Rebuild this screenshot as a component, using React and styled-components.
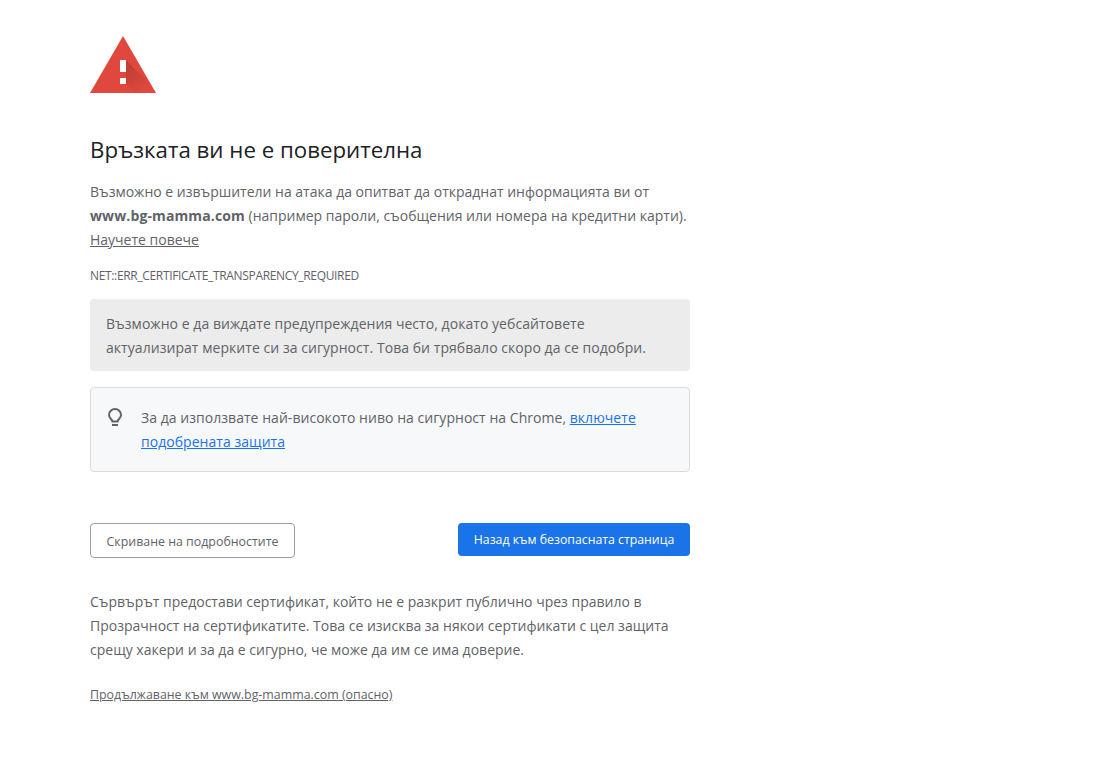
import React from 'react'
import styled, { createGlobalStyle } from 'styled-components'

const GlobalStyle = createGlobalStyle`
  html, body {
    margin: 0;
    padding: 0;
    background: #fff;
  }
  body {
    font-family: "Open Sans", "Noto Sans", "Liberation Sans", sans-serif;
    color: #5f6368;
  }
`

const Page = styled.div`
  width: 600px;
  height: 737px;
  padding: 36px 0 0 90px;
  box-sizing: content-box;
`

const WarningIcon = styled.svg`
  display: block;
  width: 66px;
  height: 57px;
`

const Heading = styled.h1`
  margin: 42px 0 0;
  font-size: 22.27px;
  font-weight: 400;
  line-height: 30px;
  color: #202124;
`

const Paragraph = styled.p`
  margin: ${p => p.$top || 0}px 0 0;
  font-size: 14px;
  line-height: 24px;
`

const Strong = styled.strong`
  font-weight: 700;
  letter-spacing: 0.12px;
`

const PlainLink = styled.a`
  color: #5f6368;
  text-decoration: underline;
`

const ErrorCode = styled.div`
  margin-top: 16px;
  font-size: 12px;
  line-height: 16px;
  letter-spacing: -0.34px;
`

const NoticeBox = styled.div`
  margin-top: 15px;
  padding: 13px 16px 11px;
  background: #ececec;
  border-radius: 4px;
  font-size: 14px;
  line-height: 24px;
  letter-spacing: 0.05px;
`

const TipBox = styled.div`
  display: flex;
  gap: 16px;
  margin-top: 16px;
  padding: 18px 16px 17px 16px;
  background: #f7f8fa;
  border: 1px solid #dadce0;
  border-radius: 4px;
  font-size: 14px;
  line-height: 24px;
  letter-spacing: 0.04px;
`

const BulbIcon = styled.svg`
  flex: none;
  width: 18px;
  height: 24px;
`

const BlueLink = styled.a`
  color: #1a73e8;
  text-decoration: underline;
`

const Buttons = styled.div`
  display: flex;
  justify-content: space-between;
  align-items: flex-start;
  margin-top: 51px;
`

const OutlineButton = styled.button`
  height: 35px;
  width: 205px;
  padding: 1px 0 0;
  background: #fff;
  border: 1px solid #9aa0a6;
  border-radius: 4px;
  color: #5f6368;
  font: 12.4px "Open Sans", "Noto Sans", sans-serif;
`

const PrimaryButton = styled.button`
  height: 33px;
  width: 232px;
  padding: 0;
  background: #1a73e8;
  border: 0;
  border-radius: 4px;
  color: #fff;
  font: 12.3px "Open Sans", "Noto Sans", sans-serif;
`

const Proceed = styled.a`
  display: block;
  margin-top: 25px;
  font-size: 12.4px;
  line-height: 16px;
  color: #5f6368;
  text-decoration: underline;
`

export default function App() {
  return (
    <>
      <GlobalStyle />
      <Page>
        <WarningIcon viewBox="0 0 66 57">
          <defs>
            <linearGradient id="warnShade" gradientUnits="userSpaceOnUse" x1="36" y1="34" x2="54" y2="54">
              <stop offset="0" stopColor="#000" stopOpacity="0.14" />
              <stop offset="1" stopColor="#000" stopOpacity="0" />
            </linearGradient>
          </defs>
          <path d="M33 0 L66 57 L0 57 Z" fill="#e0483d" />
          <path d="M36 24 L62 50 L66 57 L45 57 L36 48 Z" fill="url(#warnShade)" />
          <rect x="30" y="24" width="6" height="12" fill="#fff" />
          <rect x="30" y="42" width="6" height="6" fill="#fff" />
        </WarningIcon>
        <Heading>Връзката ви не е поверителна</Heading>
        <Paragraph $top={15}>
          Възможно е извършители на атака да опитват да откраднат информацията ви от{' '}
          <Strong>www.bg-mamma.com</Strong> (например пароли, съобщения или номера на кредитни карти).{' '}
          <PlainLink href="#">Научете повече</PlainLink>
        </Paragraph>
        <ErrorCode>NET::ERR_CERTIFICATE_TRANSPARENCY_REQUIRED</ErrorCode>
        <NoticeBox>
          Възможно е да виждате предупреждения често, докато уебсайтовете актуализират мерките си за сигурност. Това би трябвало скоро да се подобри.
        </NoticeBox>
        <TipBox>
          <BulbIcon viewBox="0 0 18 24" fill="none" stroke="#5f6368" strokeWidth="2">
            <path d="M5.5 15.5 C5.5 13.5 2 12.5 2 9 A6 6 0 0 1 14 9 C14 12.5 10.5 13.5 10.5 15.5 Z" />
            <path d="M5 19 H11" />
          </BulbIcon>
          <div>
            За да използвате най-високото ниво на сигурност на Chrome,{' '}
            <BlueLink href="#">включете подобрената защита</BlueLink>
          </div>
        </TipBox>
        <Buttons>
          <OutlineButton>Скриване на подробностите</OutlineButton>
          <PrimaryButton>Назад към безопасната страница</PrimaryButton>
        </Buttons>
        <Paragraph $top={32}>
          Сървърът предостави сертификат, който не е разкрит публично чрез правило в Прозрачност на сертификатите. Това се изисква за някои сертификати с цел защита срещу хакери и за да е сигурно, че може да им се има доверие.
        </Paragraph>
        <Proceed href="#">Продължаване към www.bg-mamma.com (опасно)</Proceed>
      </Page>
    </>
  )
}
